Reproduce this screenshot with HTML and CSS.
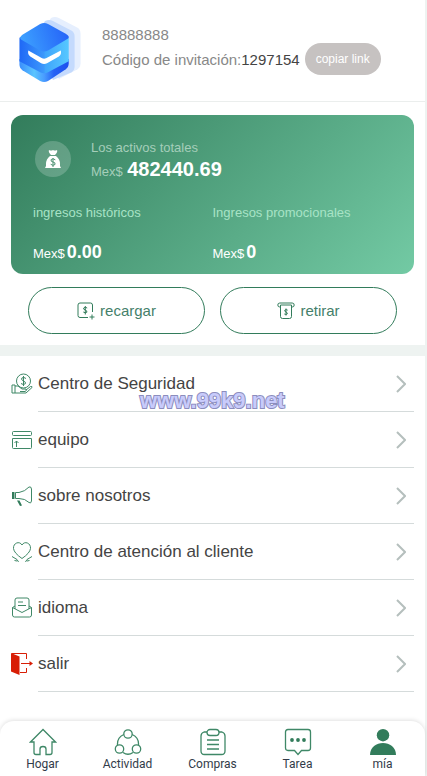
FILE: index.html
```html
<!DOCTYPE html>
<html lang="es">
<head>
<meta charset="utf-8">
<meta name="viewport" content="width=device-width, initial-scale=1">
<title>Mi cuenta</title>
<link rel="stylesheet" href="styles.css">
</head>
<body>
<div class="page">
  <header class="profile">
    <svg class="avatar" viewBox="0 0 64 68" aria-hidden="true">
      <defs>
        <linearGradient id="top" x1="0" y1="0.6" x2="1" y2="0.4"><stop offset="0" stop-color="#3da2ff"/><stop offset="1" stop-color="#2563f8"/></linearGradient>
        <linearGradient id="band" x1="0" y1="0" x2="1" y2="0"><stop offset="0" stop-color="#1f68f6"/><stop offset="0.5" stop-color="#3c98fb"/><stop offset="0.52" stop-color="#3fa5fc"/><stop offset="1" stop-color="#56c8ff"/></linearGradient>
        <linearGradient id="base" x1="0" y1="0" x2="1" y2="0"><stop offset="0" stop-color="#3a8dfc"/><stop offset="0.3" stop-color="#5bc5ff"/><stop offset="0.5" stop-color="#4a9dff"/><stop offset="0.7" stop-color="#2461f5"/><stop offset="1" stop-color="#1d50ee"/></linearGradient>
      </defs>
      <path d="M33 2q4-2 8 0l19 10q3 2 3 6v30q0 4-3 6l-19 10-20-42z" fill="#e6effe"/>
      <path d="M27 5q4-2 8 0l19 10q3 2 3 6v30q0 4-3 6l-19 8-20-42z" fill="#c4dafd"/>
      <path d="M1 44l25-16 25 16v4q0 4-3 6L30 66q-4 2-8 0L4 55q-3-2-3-6z" fill="url(#base)"/>
      <path d="M1 22l25-12 25 12v24L30 57q-4 2-8 0L1 46z" fill="url(#band)"/>
      <path d="M22 8q4-2 8 0l18 10q5 3 2 5L30 35q-4 2-8 0L3 24q-3-2 1-5z" fill="url(#top)"/>
      <path d="M10 35l14 8q2 1 4 0l15-8q1 4-2 6l-12 7q-3 1.500-6 0l-11-7q-3-2-2-6z" fill="#fff"/>
    </svg>
    <div class="identity">
      <div class="phone">88888888</div>
      <div class="invite">
        <span>Código de invitación:<span class="code">1297154</span></span>
        <button class="copy" type="button">copiar link</button>
      </div>
    </div>
  </header>

  <section class="card">
    <div class="total">
      <span class="bag">
        <svg viewBox="0 0 16 20" aria-hidden="true"><path d="M4 1q2 1 4 0 2 1 4 0 1 2-2 5H6Q3 3 4 1z" fill="#fff"/><path d="M5 7h6q4 3 4 8v2l1 2H0l1-2v-2q0-5 4-8z" fill="#fff"/><path d="M10.300 10.800Q8 9 6.200 10.500q-1 2 1.800 2.500t2 2.500Q8 17.200 5.700 15.300M8 9v9" fill="none" stroke="#4d9273"/></svg>
      </span>
      <div>
        <div class="label">Los activos totales</div>
        <div class="amount"><span class="label">Mex$</span> <strong>482440.69</strong></div>
      </div>
    </div>
    <div class="incomes">
      <div>
        <div class="income-label">ingresos históricos</div>
        <div class="income-value"><span>Mex$</span><strong>0.00</strong></div>
      </div>
      <div>
        <div class="income-label">Ingresos promocionales</div>
        <div class="income-value"><span>Mex$</span><strong>0</strong></div>
      </div>
    </div>
  </section>

  <div class="actions">
    <button type="button">
      <svg viewBox="0 0 18 18" aria-hidden="true"><path d="M15.500 10V3a2 2 0 0 0-2-2H3a2 2 0 0 0-2 2v10.500a2 2 0 0 0 2 2h8M15 12.500v5M12.500 15h5"/><path d="M10.200 6Q8 4.500 6.700 6q-.5 1.500 1.500 2t1.700 2.200Q8 11.500 6.300 10M8.300 4v8.500"/></svg>
      recargar
    </button>
    <button type="button">
      <svg viewBox="0 0 18 18" aria-hidden="true"><path d="M3.500 5H2.800a2 2 0 0 1 0-4h12.400a2 2 0 0 1 0 4h-.7M3.500 3h11v11.500a2 2 0 0 1-2 2h-7a2 2 0 0 1-2-2z"/><path d="M10.700 8.200Q9 7 7.800 8.200q-.5 1.200 1.200 1.800t1.200 2Q9 13 7.300 12M9 6.500v7"/></svg>
      retirar
    </button>
  </div>

  <nav class="menu">
    <a href="#seguridad">
      <svg class="icon" viewBox="0 0 22 22" aria-hidden="true"><circle cx="12.500" cy="8" r="7"/><path d="M15 5.500Q12.500 3.500 10.800 5q-1 2 1.700 3t1.900 2.700Q12.500 12.500 10 10.500M12.500 3v10M1 12h3v8H1zM4 13h3l4 3h4q1 2-1 2.500H9M15 17l4.500-3.500q2-.5 1.500 1L15 20H4"/></svg>
      <span class="row">Centro de Seguridad<svg class="chevron" viewBox="0 0 10 18" aria-hidden="true"><path d="M1 1l8 8-8 8"/></svg></span>
    </a>
    <a href="#equipo">
      <svg class="icon" viewBox="0 0 22 22" aria-hidden="true"><rect x="1.500" y="2.500" width="19" height="4" rx="1"/><path d="M1.500 9.500h19v9a1 1 0 0 1-1 1h-17a1 1 0 0 1-1-1zM5.500 18v-6M3.500 14l2-2 2 2"/></svg>
      <span class="row">equipo<svg class="chevron" viewBox="0 0 10 18" aria-hidden="true"><path d="M1 1l8 8-8 8"/></svg></span>
    </a>
    <a href="#nosotros">
      <svg class="icon" viewBox="0 0 22 22" aria-hidden="true"><path d="M4.500 7.500H8q6-1 10-5.500 2-1 2.500 2v12q-.5 3-2.500 1.500-4-4-10-4H4.500z"/><path class="solid" d="M1 7h2.500v7H1zM6 15.500h2.500l2.500 5-2 .5z"/></svg>
      <span class="row">sobre nosotros<svg class="chevron" viewBox="0 0 10 18" aria-hidden="true"><path d="M1 1l8 8-8 8"/></svg></span>
    </a>
    <a href="#cliente">
      <svg class="icon" viewBox="0 0 22 22" aria-hidden="true"><path d="M11 17.500Q3 12 2.500 7.500C2 2 8.500-.5 11 4c2.500-4.500 9-2 8.500 3.500Q19 12 11 17.500zM1 15.500l5 3 1.500 2.500M21 15.500l-5 3-1.500 2.500M3.500 19.500l2.500.5M18.500 19.500L16 20"/></svg>
      <span class="row">Centro de atención al cliente<svg class="chevron" viewBox="0 0 10 18" aria-hidden="true"><path d="M1 1l8 8-8 8"/></svg></span>
    </a>
    <a href="#idioma">
      <svg class="icon" viewBox="0 0 22 22" aria-hidden="true"><path d="M4 12V3q0-2 2-2h10q2 0 2 2v9M4 9L1.500 10.500V18q0 2 2 2h15q2 0 2-2v-7.500L18 9M1.500 10.500L11 15.500l9.500-5M7 5h5M7 8.500h8"/></svg>
      <span class="row">idioma<svg class="chevron" viewBox="0 0 10 18" aria-hidden="true"><path d="M1 1l8 8-8 8"/></svg></span>
    </a>
    <a href="#salir">
      <svg class="icon exit" viewBox="0 0 22 22" aria-hidden="true"><path class="solid" d="M0 0l8.500 3.500V22L0 18.500zM18.500 8l3.500 2.500-3.500 2.500z"/><path d="M1 .5h14.500V6M15.500 15v4.500H9M10 10.500h9"/></svg>
      <span class="row">salir<svg class="chevron" viewBox="0 0 10 18" aria-hidden="true"><path d="M1 1l8 8-8 8"/></svg></span>
    </a>
    <div class="watermark">www.99k9.net</div>
  </nav>

  <nav class="tabs">
    <a href="#hogar">
      <svg viewBox="0 0 28 28" aria-hidden="true"><path d="M14 1.500L1.500 14H5v10.500q0 2 2 2h4V21q0-2.500 3-2.500t3 2.500v5.500h4q2 0 2-2V14h3.500z"/></svg>
      Hogar
    </a>
    <a href="#actividad">
      <svg viewBox="0 0 28 28" aria-hidden="true"><circle cx="14" cy="6" r="4.200"/><circle cx="5.500" cy="21" r="4.200"/><circle cx="22.500" cy="21" r="4.200"/><path d="M9.800 6.500Q3 9.500 3.500 17M18.200 6.500Q25 9.500 24.500 17M9 24.500q5 3.500 10 0"/></svg>
      Actividad
    </a>
    <a href="#compras">
      <svg viewBox="0 0 28 28" aria-hidden="true"><path d="M8 4H5Q2 5 2 8v15q0 3.500 3.500 3.500h17q3.500 0 3.500-3.500V8q0-3-3-4h-3M8 12h12M8 16.500h12M8 21h12"/><rect x="8" y="1.500" width="12" height="6" rx="3"/></svg>
      Compras
    </a>
    <a href="#tarea">
      <svg viewBox="0 0 28 28" aria-hidden="true"><path d="M4 1.500h20q2.500 0 2.500 2.500v16q0 2.500-2.500 2.500h-6.500L14 26.500l-3.500-4H4q-2.500 0-2.500-2.500V4Q1.500 1.500 4 1.500z"/><g class="solid"><circle cx="8" cy="12" r="1.900"/><circle cx="14" cy="12" r="1.900"/><circle cx="20" cy="12" r="1.900"/></g></svg>
      Tarea
    </a>
    <a href="#mia" aria-current="page">
      <svg viewBox="0 0 28 28" aria-hidden="true"><g class="solid"><circle cx="14" cy="7.200" r="6.200"/><path d="M1 27c0-16 26-16 26 0z"/></g></svg>
      mía
    </a>
  </nav>
</div>
</body>
</html>
```
FILE: styles.css
```css
* {
  box-sizing: border-box;
}

body {
  margin: 0;
  background: #eef3f1;
  color: #444;
  font-family: "Liberation Sans", Arial, sans-serif;
}

button {
  font: inherit;
  cursor: pointer;
}

a {
  color: inherit;
  text-decoration: none;
}

svg {
  display: block;
  flex: none;
}

.page {
  display: flex;
  flex-direction: column;
  min-height: 100vh;
  margin-right: 2px;
  background: #fff;
}

.profile {
  display: flex;
  padding: 16px 18px 18px;
  gap: 20px;
  border-bottom: 1px solid #ebeeed;
}

.avatar {
  width: 64px;
  height: 67px;
}

.identity {
  padding-top: 10px;
  color: #888;
  font-size: 15px;
}

.phone {
  line-height: 17px;
}

.invite {
  display: flex;
  align-items: center;
  gap: 5px;
}

.code {
  color: #444;
}

.copy {
  height: 32px;
  padding: 0 11px;
  border: 0;
  border-radius: 16px;
  background: #c6c2c1;
  color: #fff;
  font-size: 12px;
}

.card {
  margin: 13px 11px;
  padding: 25px 22px 8px;
  border-radius: 12px;
  background: linear-gradient(135deg, #327c5b, #73caa4);
  color: #fff;
}

.total {
  display: flex;
  align-items: flex-start;
  gap: 20px;
  padding-left: 2px;
}

.bag {
  display: grid;
  place-items: center;
  width: 36px;
  height: 36px;
  margin-top: 1px;
  border-radius: 50%;
  background: rgba(255, 255, 255, 0.2);
}

.bag svg {
  width: 16px;
  height: 20px;
}

.label {
  color: #a5ceba;
  font-size: 13px;
  line-height: 16px;
}

.amount {
  line-height: 26px;
}

.amount strong {
  font-size: 20px;
}

.incomes {
  display: grid;
  grid-template-columns: 1fr 1fr;
  margin-top: 21px;
}

.income-label {
  color: #a8e3c6;
  font-size: 13px;
  line-height: 16px;
}

.income-value {
  margin-top: 19px;
  font-size: 13px;
  line-height: 24px;
}

.income-value strong {
  margin-left: 2px;
  font-size: 18px;
}

.actions {
  display: grid;
  grid-template-columns: 1fr 1fr;
  gap: 15px;
  padding: 0 28px 11px;
}

.actions button {
  display: flex;
  align-items: center;
  justify-content: center;
  gap: 5px;
  height: 47px;
  border: 1px solid #327c5b;
  border-radius: 24px;
  background: #fff;
  color: #45806a;
  font-size: 15px;
}

.actions svg {
  width: 18px;
  height: 18px;
  fill: none;
  stroke: #327c5b;
}

.menu {
  position: relative;
  padding: 0 11px;
  border-top: 11px solid #eef3f1;
}

.menu a {
  display: flex;
  align-items: center;
  gap: 5px;
  font-size: 17px;
}

.icon {
  width: 22px;
  height: 22px;
  fill: none;
  stroke: #3f8867;
}

.solid {
  fill: #327c5b;
  stroke: none;
}

.exit {
  stroke: #d81e06;
}

.exit .solid {
  fill: #d81e06;
}

.row {
  display: flex;
  flex: 1;
  align-items: center;
  justify-content: space-between;
  height: 56px;
  border-bottom: 1px solid #d5dbdb;
}

.chevron {
  width: 10px;
  height: 18px;
  margin-right: 8px;
  fill: none;
  stroke: #b5bfbd;
  stroke-width: 2;
}

.watermark {
  position: absolute;
  top: 33px;
  left: 140px;
  color: #c8cbfb;
  font-size: 22px;
  font-weight: bold;
  line-height: 24px;
  -webkit-text-stroke: 2px #8c8dbd;
  paint-order: stroke fill;
  pointer-events: none;
}

.tabs {
  display: grid;
  grid-template-columns: repeat(5, 1fr);
  margin-top: auto;
  padding: 7px 0 3px;
  border-radius: 14px 14px 0 0;
  box-shadow: 0 -1px 4px rgba(0, 0, 0, 0.12);
}

.tabs a {
  display: flex;
  flex-direction: column;
  align-items: center;
  color: #323b49;
  font-family: Roboto, sans-serif;
  font-size: 12px;
  line-height: 17px;
}

.tabs svg {
  width: 28px;
  height: 28px;
  fill: none;
  stroke: #3f8867;
  stroke-width: 1.3;
}

.tabs .solid {
  fill: #327c5b;
  stroke: none;
}
```
